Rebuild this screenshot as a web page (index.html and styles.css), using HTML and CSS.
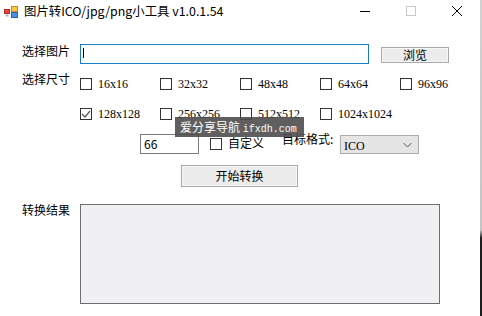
FILE: index.html
```html
<!DOCTYPE html>
<html lang="zh-CN">
<head>
    <meta charset="UTF-8">
    <title>图片转ICO/jpg/png小工具 v1.0.1.54</title>
    <link rel="stylesheet" href="styles.css">
</head>
<body>
    <div class="screen">
        <div class="window">
            <div class="titlebar">
                <svg class="app-icon" width="14" height="12" viewBox="0 0 14 12">
                    <rect x="7.5" y="0.5" width="6" height="5" fill="#f7c948" stroke="#d9822b"/>
                    <rect x="0.5" y="3.5" width="5" height="4" fill="#e24b3b" stroke="#b52a1e"/>
                    <rect x="7.5" y="6.5" width="6" height="5" fill="#4a8fe0" stroke="#2c62b0"/>
                    <rect x="1.5" y="8.5" width="3" height="2" fill="#9bb7d8"/>
                </svg>
                <span class="title">图片转ICO/jpg/png小工具 v1.0.1.54</span>
                <div class="controls">
                    <span class="ctl"><svg width="10" height="10" viewBox="0 0 10 10"><path d="M0 5.5H10" stroke="#000" stroke-width="1"/></svg></span>
                    <span class="ctl"><svg width="10" height="10" viewBox="0 0 10 10"><rect x="0.5" y="0.5" width="9" height="9" fill="none" stroke="#c8c8c8"/></svg></span>
                    <span class="ctl"><svg width="10" height="10" viewBox="0 0 10 10"><path d="M0 0L10 10M10 0L0 10" stroke="#000" stroke-width="1"/></svg></span>
                </div>
            </div>

            <div class="form">
                <div class="row row-file">
                    <span class="label">选择图片</span>
                    <div class="file-input"><span class="caret"></span></div>
                    <button class="btn btn-browse">浏览</button>
                </div>

                <div class="row row-sizes">
                    <span class="label">选择尺寸</span>
                    <div class="checks">
                        <label class="check"><span class="box"></span><span class="check-text">16x16</span></label>
                        <label class="check"><span class="box"></span><span class="check-text">32x32</span></label>
                        <label class="check"><span class="box"></span><span class="check-text">48x48</span></label>
                        <label class="check"><span class="box"></span><span class="check-text">64x64</span></label>
                        <label class="check"><span class="box"></span><span class="check-text">96x96</span></label>
                    </div>
                </div>

                <div class="row row-sizes2">
                    <div class="checks">
                        <label class="check">
                            <span class="box">
                                <svg width="10" height="10" viewBox="0 0 10 10"><path d="M1 5L4 8L9 2" fill="none" stroke="#555" stroke-width="1.2"/></svg>
                            </span>
                            <span class="check-text">128x128</span>
                        </label>
                        <label class="check"><span class="box"></span><span class="check-text">256x256</span></label>
                        <label class="check"><span class="box"></span><span class="check-text">512x512</span></label>
                        <label class="check"><span class="box"></span><span class="check-text">1024x1024</span></label>
                    </div>
                </div>

                <div class="row row-options">
                    <div class="size-input">66</div>
                    <span class="box box-custom"></span>
                    <span class="custom-text">自定义</span>
                    <span class="format-label">目标格式:</span>
                    <div class="select">
                        <span class="select-text">ICO</span>
                        <svg width="9" height="6" viewBox="0 0 9 6"><path d="M0.5 1L4.5 5L8.5 1" fill="none" stroke="#555" stroke-width="1"/></svg>
                    </div>
                </div>

                <div class="row row-start">
                    <button class="btn btn-start">开始转换</button>
                </div>

                <div class="row row-result">
                    <span class="label label-result">转换结果</span>
                    <div class="result"></div>
                </div>
            </div>

            <!-- znak wodny nad formularzem -->
            <div class="watermark">爱分享导航 <span class="watermark-url">ifxdh.com</span></div>
        </div>
        <div class="edge"></div>
    </div>
</body>
</html>
```

FILE: styles.css
```css
body {
    margin: 0;
    background: #fff;
    font-family: "Noto Sans CJK SC", "Noto Sans", sans-serif;
    font-size: 12px;
    color: #000;
}

.screen {
    display: flex;
    width: 482px;
    height: 316px;
}

.window {
    position: relative;
    width: 480px;
    height: 316px;
    background: #fff;
}

.edge {
    width: 2px;
    height: 316px;
    background: linear-gradient(#d2d2d2 0, #c4c4c4 230px, #1e1e1e 238px, #1e1e1e 100%);
}

/* pasek tytułu */
.titlebar {
    display: flex;
    align-items: center;
    height: 22px;
}

.app-icon {
    margin-left: 4px;
    margin-top: 1px;
}

.title {
    margin-left: 6px;
    font-size: 12.4px;
    line-height: 16px;
}

.controls {
    display: flex;
    margin-left: auto;
}

.ctl {
    display: flex;
    justify-content: center;
    align-items: center;
    width: 46px;
    height: 22px;
}

/* formularz */
.row {
    display: flex;
    align-items: flex-start;
    padding-left: 22px;
}

.label {
    width: 58px;
    line-height: 16px;
    margin-top: -1px;
}

.row-file {
    margin-top: 22px;
    height: 20px;
}

.file-input {
    box-sizing: border-box;
    width: 289px;
    height: 20px;
    border: 1px solid #1a7fc8;
    background: #fff;
}

.caret {
    display: block;
    width: 1px;
    height: 10px;
    margin: 3px 0 0 2px;
    background: #000;
}

.btn {
    box-sizing: border-box;
    padding: 0;
    border: 1px solid #a8a8a8;
    background: #ececec;
    box-shadow: inset 0 0 0 1px #f7f7f7;
    font-family: "Noto Sans CJK SC", "Noto Sans", sans-serif;
    font-size: 12px;
    line-height: 14px;
    color: #000;
}

.btn-browse {
    width: 68px;
    height: 16px;
    margin: 3px 0 0 12px;
}

.row-sizes {
    margin-top: 8px;
}

.row-sizes .checks {
    margin-top: 6px;
}

.row-sizes2 {
    margin-top: 18px;
    padding-left: 80px;
}

.checks {
    display: flex;
}

.check {
    display: flex;
    align-items: center;
    width: 80px;
    height: 12px;
}

.box {
    box-sizing: border-box;
    display: flex;
    justify-content: center;
    align-items: center;
    width: 12px;
    height: 12px;
    border: 1px solid #333;
    background: #fff;
    flex-shrink: 0;
}

.check-text {
    margin-left: 6px;
    font-family: "Liberation Serif", serif;
    font-size: 12px;
    line-height: 12px;
    white-space: nowrap;
}

.row-options {
    margin-top: 14px;
    padding-left: 140px;
    height: 20px;
}

.size-input {
    box-sizing: border-box;
    width: 59px;
    height: 20px;
    padding-left: 3px;
    border: 1px solid #7a7a7a;
    line-height: 17px;
}

.box-custom {
    margin: 4px 0 0 11px;
}

.custom-text {
    width: 54px;
    margin: 1px 0 0 6px;
    line-height: 16px;
}

.format-label {
    width: 58px;
    margin-top: -3px;
    line-height: 16px;
}

.select {
    box-sizing: border-box;
    display: flex;
    align-items: center;
    justify-content: space-between;
    width: 79px;
    height: 19px;
    margin-top: 1px;
    padding: 0 6px 0 3px;
    border: 1px solid #acacac;
    background: #e5e5e5;
}

.select-text {
    font-family: "Liberation Serif", serif;
    font-size: 12px;
    line-height: 12px;
    margin-top: 2px;
}

.row-start {
    margin-top: 11px;
    padding-left: 181px;
}

.btn-start {
    width: 117px;
    height: 22px;
}

.row-result {
    margin-top: 17px;
}

.label-result {
    margin-top: -2px;
}

.result {
    box-sizing: border-box;
    width: 360px;
    height: 100px;
    border: 1px solid #6e6e6e;
    background: #f0eff2;
}

/* znak wodny */
.watermark {
    position: absolute;
    left: 175px;
    top: 117px;
    width: 129px;
    height: 20px;
    box-sizing: border-box;
    padding-left: 5px;
    background: rgba(78, 78, 78, 0.9);
    color: #fff;
    font-size: 12px;
    line-height: 20px;
    white-space: nowrap;
}

.watermark-url {
    font-family: "Liberation Mono", monospace;
    font-size: 10px;
}
```
